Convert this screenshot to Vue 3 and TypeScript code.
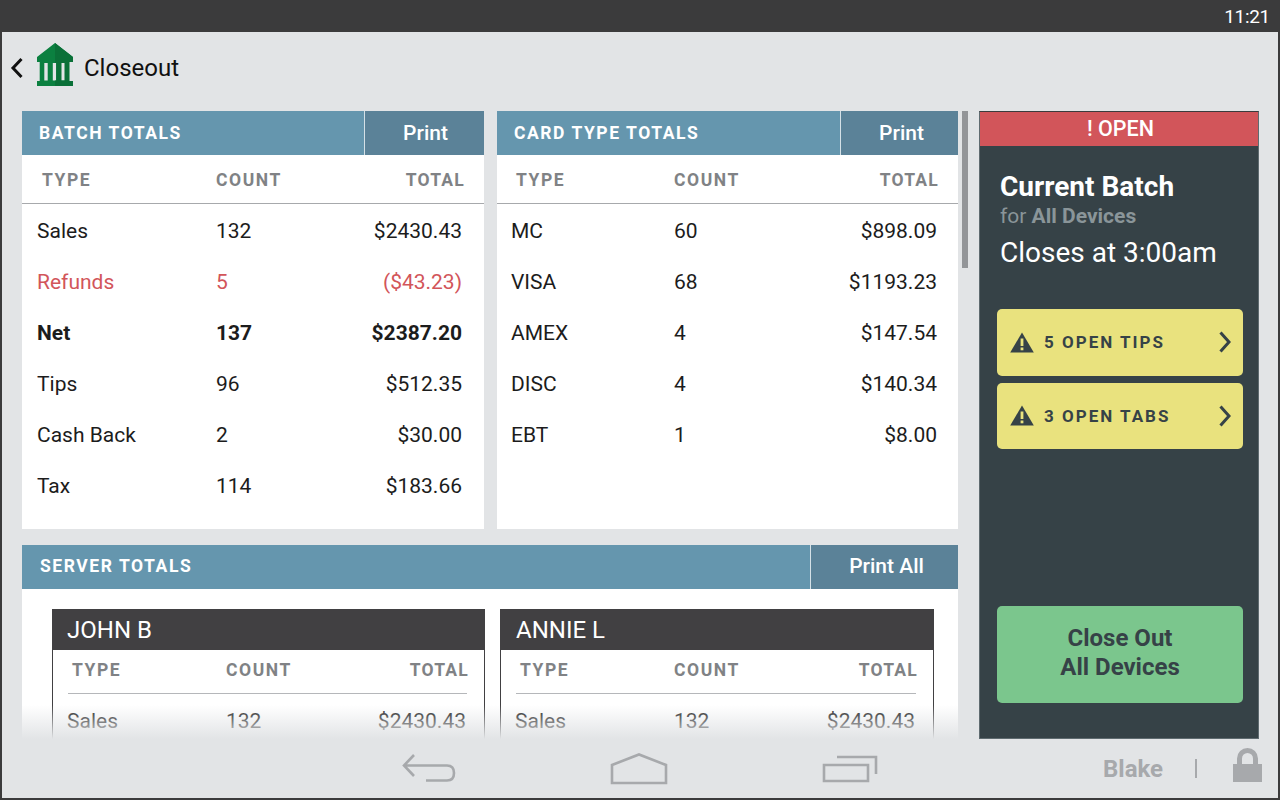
<script setup lang="ts">
interface Row {
  type: string
  count: string
  total: string
  kind?: string
}

const batchRows: Row[] = [
  { type: 'Sales', count: '132', total: '$2430.43' },
  { type: 'Refunds', count: '5', total: '($43.23)', kind: 'refund' },
  { type: 'Net', count: '137', total: '$2387.20', kind: 'net' },
  { type: 'Tips', count: '96', total: '$512.35' },
  { type: 'Cash Back', count: '2', total: '$30.00' },
  { type: 'Tax', count: '114', total: '$183.66' },
]

const cardRows: Row[] = [
  { type: 'MC', count: '60', total: '$898.09' },
  { type: 'VISA', count: '68', total: '$1193.23' },
  { type: 'AMEX', count: '4', total: '$147.54' },
  { type: 'DISC', count: '4', total: '$140.34' },
  { type: 'EBT', count: '1', total: '$8.00' },
]

const servers = ['JOHN B', 'ANNIE L']
const alerts = ['5 OPEN TIPS', '3 OPEN TABS']
</script>

<template>
  <div class="device">
    <div class="status-bar"><span>11:21</span></div>

    <header class="top-bar">
      <svg class="chevron" width="14" height="22" viewBox="0 0 14 22">
        <path d="M11.5 2 L3 11 L11.5 20" fill="none" stroke="#111" stroke-width="3" />
      </svg>
      <svg class="bank" width="38" height="43" viewBox="0 0 38 43">
        <path d="M19 0 L37 14 V19 H1 V14 Z M3.7 19 H33.3 V38 H37 V43 H1 V38 H3.7 Z M8.3 20 V37.5 H11.7 V20 Z M16.8 20 V37.5 H20.2 V20 Z M25.3 20 V37.5 H28.7 V20 Z" fill="#0b8040" fill-rule="evenodd" />
        <path d="M19 0 L37 14 V19 H33.3 V38 H37 V43 H19 V37.5 H20.2 V20 H19 Z M25.3 20 V37.5 H28.7 V20 Z" fill="#0a7038" fill-rule="evenodd" />
      </svg>
      <h1>Closeout</h1>
    </header>

    <main class="main">
      <div class="scroll-area">
        <div class="scroll-content">
          <div class="top-cards">
            <section class="card batch">
              <div class="card-head">
                <h2>BATCH TOTALS</h2>
                <button type="button" class="print">Print</button>
              </div>
              <div class="col-heads">
                <span class="c-type">TYPE</span><span class="c-count">COUNT</span><span class="c-total">TOTAL</span>
              </div>
              <div v-for="row in batchRows" :key="row.type" class="row" :class="row.kind">
                <span class="c-type">{{ row.type }}</span><span class="c-count">{{ row.count }}</span><span class="c-total">{{ row.total }}</span>
              </div>
            </section>

            <section class="card cards">
              <div class="card-head">
                <h2>CARD TYPE TOTALS</h2>
                <button type="button" class="print">Print</button>
              </div>
              <div class="col-heads">
                <span class="c-type">TYPE</span><span class="c-count">COUNT</span><span class="c-total">TOTAL</span>
              </div>
              <div v-for="row in cardRows" :key="row.type" class="row">
                <span class="c-type">{{ row.type }}</span><span class="c-count">{{ row.count }}</span><span class="c-total">{{ row.total }}</span>
              </div>
            </section>
          </div>

          <section class="card servers">
            <div class="card-head">
              <h2>SERVER TOTALS</h2>
              <button type="button" class="print print-all">Print All</button>
            </div>
            <div class="server-grid">
              <div v-for="name in servers" :key="name" class="server">
                <div class="server-name">{{ name }}</div>
                <div class="server-heads">
                  <span class="c-type">TYPE</span><span class="c-count">COUNT</span><span class="c-total">TOTAL</span>
                </div>
                <div class="server-row">
                  <span class="c-type">Sales</span><span class="c-count">132</span><span class="c-total">$2430.43</span>
                </div>
              </div>
            </div>
          </section>
        </div>
        <div class="fade"></div>
        <div class="scroll-thumb"></div>
      </div>

      <aside class="side">
        <div class="open-flag">! OPEN</div>
        <div class="side-body">
          <h3>Current Batch</h3>
          <p class="for">for <b>All Devices</b></p>
          <p class="closes">Closes at 3:00am</p>
          <button v-for="text in alerts" :key="text" type="button" class="alert">
            <svg width="24" height="21" viewBox="0 0 24 21">
              <path d="M12 0.5 L23.8 20.5 H0.2 Z" fill="#364247" />
              <rect x="10.6" y="6.5" width="2.8" height="7.5" fill="#e9e27e" />
              <rect x="10.6" y="15.5" width="2.8" height="2.8" fill="#e9e27e" />
            </svg>
            <span>{{ text }}</span>
            <svg class="alert-arrow" width="12" height="22" viewBox="0 0 12 22">
              <path d="M1.5 1.5 L10 11 L1.5 20.5" fill="none" stroke="#364247" stroke-width="3" />
            </svg>
          </button>
          <button type="button" class="close-out">Close Out<br />All Devices</button>
        </div>
      </aside>
    </main>

    <footer class="nav-bar">
      <svg class="nav-back" width="54" height="30" viewBox="0 0 54 30">
        <path d="M12 2 L2 12.5 L12 23 M2 12.5 H45 Q52 12.5 52 20 Q52 27.5 45 27.5 H24" fill="none" stroke="#a7a9ac" stroke-width="2.6" />
      </svg>
      <svg class="nav-home" width="58" height="32" viewBox="0 0 58 32">
        <path d="M2 12 L29 1.5 L56 12 V30 H2 Z" fill="none" stroke="#a7a9ac" stroke-width="2.6" />
      </svg>
      <svg class="nav-recent" width="56" height="28" viewBox="0 0 56 28">
        <path d="M2 10 H46 V26 H2 Z M15 2 H54 V19" fill="none" stroke="#a7a9ac" stroke-width="2.6" />
      </svg>
      <span class="user">Blake</span>
      <span class="divider"></span>
      <svg class="lock" width="29" height="34" viewBox="0 0 29 34">
        <path d="M6.5 17 V10.5 A8 8 0 0 1 22.5 10.5 V17" fill="none" stroke="#a7a9ac" stroke-width="5" />
        <rect x="0" y="16" width="29" height="18" fill="#a7a9ac" />
      </svg>
    </footer>
  </div>
</template>

<style scoped>
.device {
  width: 1280px;
  height: 800px;
  box-sizing: border-box;
  display: flex;
  flex-direction: column;
  overflow: hidden;
  background: #e2e4e6;
  border-left: 2px solid #3b3b3c;
  border-right: 2px solid #3b3b3c;
  border-bottom: 2px solid #3b3b3c;
  color: #1c1c1c;
  font-family: Roboto, "Liberation Sans", sans-serif;
}

.status-bar {
  flex: none;
  height: 32px;
  margin: 0 -2px;
  display: flex;
  align-items: center;
  justify-content: flex-end;
  padding-right: 10px;
  background: #3b3b3c;
  color: #fff;
  font-size: 19px;
  letter-spacing: -0.3px;
}

.top-bar {
  flex: none;
  height: 79px;
  display: flex;
  align-items: center;
  padding-left: 8px;
}

.chevron { margin-right: 12px; margin-top: -7px; }
.bank { margin-right: 10px; margin-top: -14px; }

.top-bar h1 {
  margin: -7px 0 0;
  font-size: 24px;
  font-weight: 400;
  color: #111;
}

.main {
  flex: 1;
  min-height: 0;
  display: flex;
  padding-left: 20px;
}

.scroll-area {
  position: relative;
  width: 946px;
  overflow: hidden;
}

.scroll-content {
  width: 936px;
}

.top-cards {
  display: flex;
  gap: 13px;
}

.card { background: #fff; }

.batch { width: 462px; height: 418px; }
.cards { width: 461px; height: 418px; }

.card-head {
  display: flex;
  height: 44px;
  background: #6596ae;
  color: #fff;
}

.card-head h2 {
  flex: 1;
  margin: 0;
  padding-left: 17px;
  font-size: 17.5px;
  font-weight: 700;
  letter-spacing: 1.55px;
  line-height: 44px;
}

.servers .card-head h2 {
  padding-left: 18px;
  line-height: 43px;
}

.print {
  width: 120px;
  padding: 0 0 0 2px;
  border: 0;
  border-left: 1px solid #d5e1e7;
  background: #5b8298;
  color: #fff;
  font: 500 21px Roboto, sans-serif;
}

.cards .print { width: 118px; padding-left: 4px; }
.print-all { width: 148px; padding: 0 0 2px 4px; }

.col-heads,
.row,
.server-heads,
.server-row {
  display: flex;
  align-items: center;
}

.c-type { flex: none; }
.c-count { flex: none; }
.c-total { flex: 1; text-align: right; }

.col-heads {
  height: 47px;
  border-bottom: 1px solid #a7a9ac;
  padding: 1px 19px 0 20px;
  color: #808285;
  font-size: 17.5px;
  font-weight: 700;
  letter-spacing: 1.57px;
}

.col-heads .c-total,
.server-heads .c-total { letter-spacing: 1.2px; }

.row {
  height: 51px;
  padding: 0 22px 0 15px;
  font-size: 21px;
}

.col-heads + .row { margin-top: 1px; }

.batch .col-heads .c-type { width: 174px; }
.batch .row .c-type { width: 179px; }
.cards .col-heads { padding-left: 19px; padding-right: 19px; }
.cards .col-heads .c-type { width: 158px; }
.cards .row { padding: 0 21px 0 14px; }
.cards .row .c-type { width: 163px; }

.row.refund { color: #d2555a; }
.row.net { font-weight: 700; }

.servers {
  margin-top: 16px;
  height: 300px;
}

.server-grid {
  display: flex;
  gap: 15px;
  padding: 20px 0 0 30px;
}

.server {
  width: 433px;
  box-sizing: border-box;
  border: 1px solid #414042;
  border-bottom: 0;
}

.server + .server { width: 434px; }

.server-name {
  height: 41px;
  margin: -1px -1px 0;
  padding-left: 15px;
  background: #414042;
  color: #fff;
  font-size: 24px;
  line-height: 42px;
}

.server + .server .server-name { padding-left: 16px; }

.server-heads {
  height: 39px;
  margin: 0 17px 0 15px;
  padding: 0 0 4px 4px;
  border-bottom: 1px solid #b5b7ba;
  color: #808285;
  font-size: 17.5px;
  font-weight: 700;
  letter-spacing: 1.57px;
}

.server-heads .c-type { width: 154px; }
.server-heads .c-total { margin-right: -2px; }

.server-row {
  height: 54px;
  padding: 0 18px 0 14px;
  font-size: 21px;
}

.server-row .c-type { width: 159px; }

.fade {
  position: absolute;
  left: 0;
  bottom: 0;
  width: 936px;
  height: 34px;
  background: linear-gradient(to bottom, rgba(226, 228, 230, 0), #e2e4e6);
}

.scroll-thumb {
  position: absolute;
  top: 0;
  right: 0;
  width: 6px;
  height: 157px;
  background: #939598;
}

.side {
  width: 280px;
  margin-left: 11px;
  box-sizing: border-box;
  display: flex;
  flex-direction: column;
  background: #364247;
  border: 1px solid #5f6b70;
  border-top-color: #3b3b3c;
}

.open-flag {
  flex: none;
  height: 34px;
  padding-left: 3px;
  background: #d2555a;
  color: #fff;
  font-size: 21.5px;
  font-weight: 500;
  line-height: 33px;
  text-align: center;
}

.side-body {
  flex: 1;
  display: flex;
  flex-direction: column;
  padding: 25px 15px 35px 20px;
}

.side-body h3 {
  margin: 0;
  color: #fff;
  font-size: 28px;
  font-weight: 700;
  line-height: 32px;
}

.for {
  margin: 0;
  color: #8a9599;
  font-size: 21px;
  line-height: 26px;
}

.for b { font-weight: 700; }

.closes {
  margin: 7px 0 39px;
  color: #fff;
  font-size: 28px;
  line-height: 34px;
}

.alert {
  width: 246px;
  height: 66.5px;
  margin: 0 0 7px -3px;
  padding: 0 12px 0 13px;
  display: flex;
  align-items: center;
  border: 0;
  border-radius: 5px;
  background: #e9e27e;
  color: #364247;
  font: 700 17px Roboto, sans-serif;
  letter-spacing: 2px;
}

.alert span { margin-left: 10px; }
.alert-arrow { margin-left: auto; }

.close-out {
  width: 246px;
  height: 97px;
  margin: auto 0 0 -3px;
  padding: 0 0 4px;
  border: 0;
  border-radius: 5px;
  background: #7bc68d;
  color: #364247;
  font: 700 24px/29px Roboto, sans-serif;
}

.nav-bar {
  flex: none;
  height: 59px;
  display: flex;
  align-items: center;
  padding-left: 400px;
  color: #a7a9ac;
}

.nav-home { margin-left: 154px; }
.nav-recent { margin-left: 154px; }
.nav-back { margin-top: -2px; }

.user {
  margin-left: 225px;
  font-size: 24px;
  font-weight: 700;
}

.divider {
  width: 2px;
  height: 19px;
  margin-left: 32px;
  background: #a7a9ac;
}

.lock { margin-left: 36px; margin-top: -7px; }
</style>

<style>
html, body { margin: 0; padding: 0; }
</style>
